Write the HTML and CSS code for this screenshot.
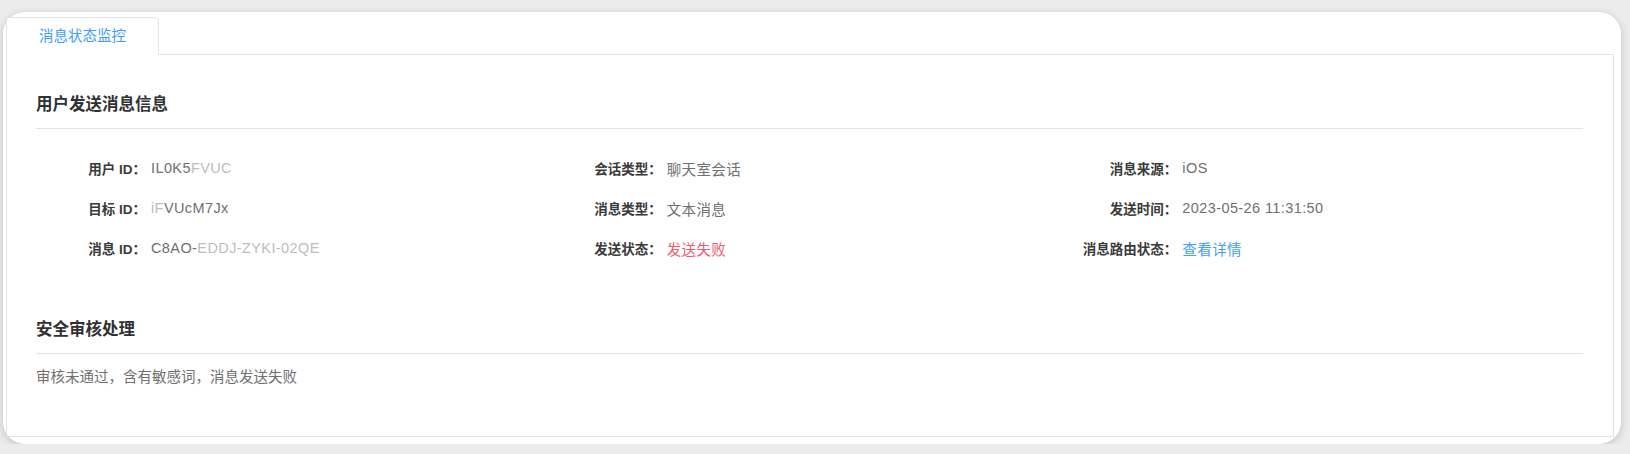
FILE: index.html
```
<!DOCTYPE html>
<html lang="zh-CN">
<head>
    <meta charset="UTF-8">
    <meta name="viewport" content="width=device-width, initial-scale=1.0">
    <title>消息状态监控</title>
    <link rel="stylesheet" href="styles.css">
</head>
<body>
    <div class="frame">
        <div class="tabs">
            <div class="tab-header">
                <div class="tab active">消息状态监控</div>
            </div>

            <div class="tab-content">
                <h3 class="section-title">用户发送消息信息</h3>

                <div class="info-grid">
                    <div class="info-item">
                        <span class="label">用户 ID：</span>
                        <span class="value">IL0K5<span class="masked">FVUC</span></span>
                    </div>
                    <div class="info-item">
                        <span class="label">会话类型：</span>
                        <span class="value">聊天室会话</span>
                    </div>
                    <div class="info-item">
                        <span class="label">消息来源：</span>
                        <span class="value">iOS</span>
                    </div>

                    <div class="info-item">
                        <span class="label">目标 ID：</span>
                        <span class="value"><span class="masked">iF</span>VUcM7Jx</span>
                    </div>
                    <div class="info-item">
                        <span class="label">消息类型：</span>
                        <span class="value">文本消息</span>
                    </div>
                    <div class="info-item">
                        <span class="label">发送时间：</span>
                        <span class="value">2023-05-26 11:31:50</span>
                    </div>

                    <div class="info-item">
                        <span class="label">消息 ID：</span>
                        <span class="value">C8AO-<span class="masked">EDDJ-ZYKI-02QE</span></span>
                    </div>
                    <div class="info-item">
                        <span class="label">发送状态：</span>
                        <span class="value fail">发送失败</span>
                    </div>
                    <div class="info-item">
                        <span class="label">消息路由状态：</span>
                        <a class="value link" href="#">查看详情</a>
                    </div>
                </div>

                <h3 class="section-title second">安全审核处理</h3>
                <p class="audit-text">审核未通过，含有敏感词，消息发送失败</p>
            </div>
        </div>
    </div>
</body>
</html>
```

FILE: styles.css
```
body {
    margin: 0;
    background-color: #ececec;
    font-family: "Liberation Sans", "Noto Sans CJK SC", sans-serif;
    color: #333;
}

/* cartão branco arredondado */
.frame {
    margin: 12px 9px 0 3px;
    height: 432px;
    background-color: #ffffff;
    border-radius: 22px;
    box-shadow: 0 2px 8px rgba(0, 0, 0, 0.18);
    padding: 5px 7px 7px 3px;
    box-sizing: border-box;
}

.tabs {
    height: 100%;
    display: flex;
    flex-direction: column;
}

.tab-header {
    display: flex;
    height: 38px;
    border-bottom: 1px solid #e4e4e4;
    box-sizing: border-box;
}

.tab {
    width: 153px;
    box-sizing: border-box;
    padding-left: 32px;
    line-height: 37px;
    font-size: 14.5px;
    border: 1px solid #e4e4e4;
    border-bottom: none;
    border-radius: 4px 4px 0 0;
    background-color: #ffffff;
    margin-bottom: -1px;
}

.tab.active {
    color: #409eff;
    height: 38px;
}

.tab-content {
    flex: 1;
    border: 1px solid #e4e4e4;
    border-top: none;
    padding: 0 30px 0 29px;
}

.section-title {
    margin: 37px 0 0;
    padding-bottom: 12px;
    font-size: 16.5px;
    line-height: 24px;
    font-weight: bold;
    color: #303133;
    border-bottom: 1px solid #e4e4e4;
}

.section-title.second {
    margin-top: 49px;
}

.info-grid {
    display: grid;
    grid-template-columns: repeat(3, 1fr);
    margin-top: 19px;
}

.info-item {
    display: flex;
    align-items: center;
    height: 40px;
    font-size: 13.5px;
}

.label {
    width: 110px;
    text-align: right;
    font-weight: bold;
    color: #3a3a3a;
}

.value {
    margin-left: 5px;
    font-size: 14.5px;
    letter-spacing: 0.4px;
    color: #707070;
}

.masked {
    color: #bdbdbd;
}

.fail {
    color: #ef5b6a;
}

.link {
    color: #409eff;
    text-decoration: none;
}

.audit-text {
    margin: 12px 0 0;
    font-size: 14.5px;
    line-height: 22px;
    color: #707070;
}
```
